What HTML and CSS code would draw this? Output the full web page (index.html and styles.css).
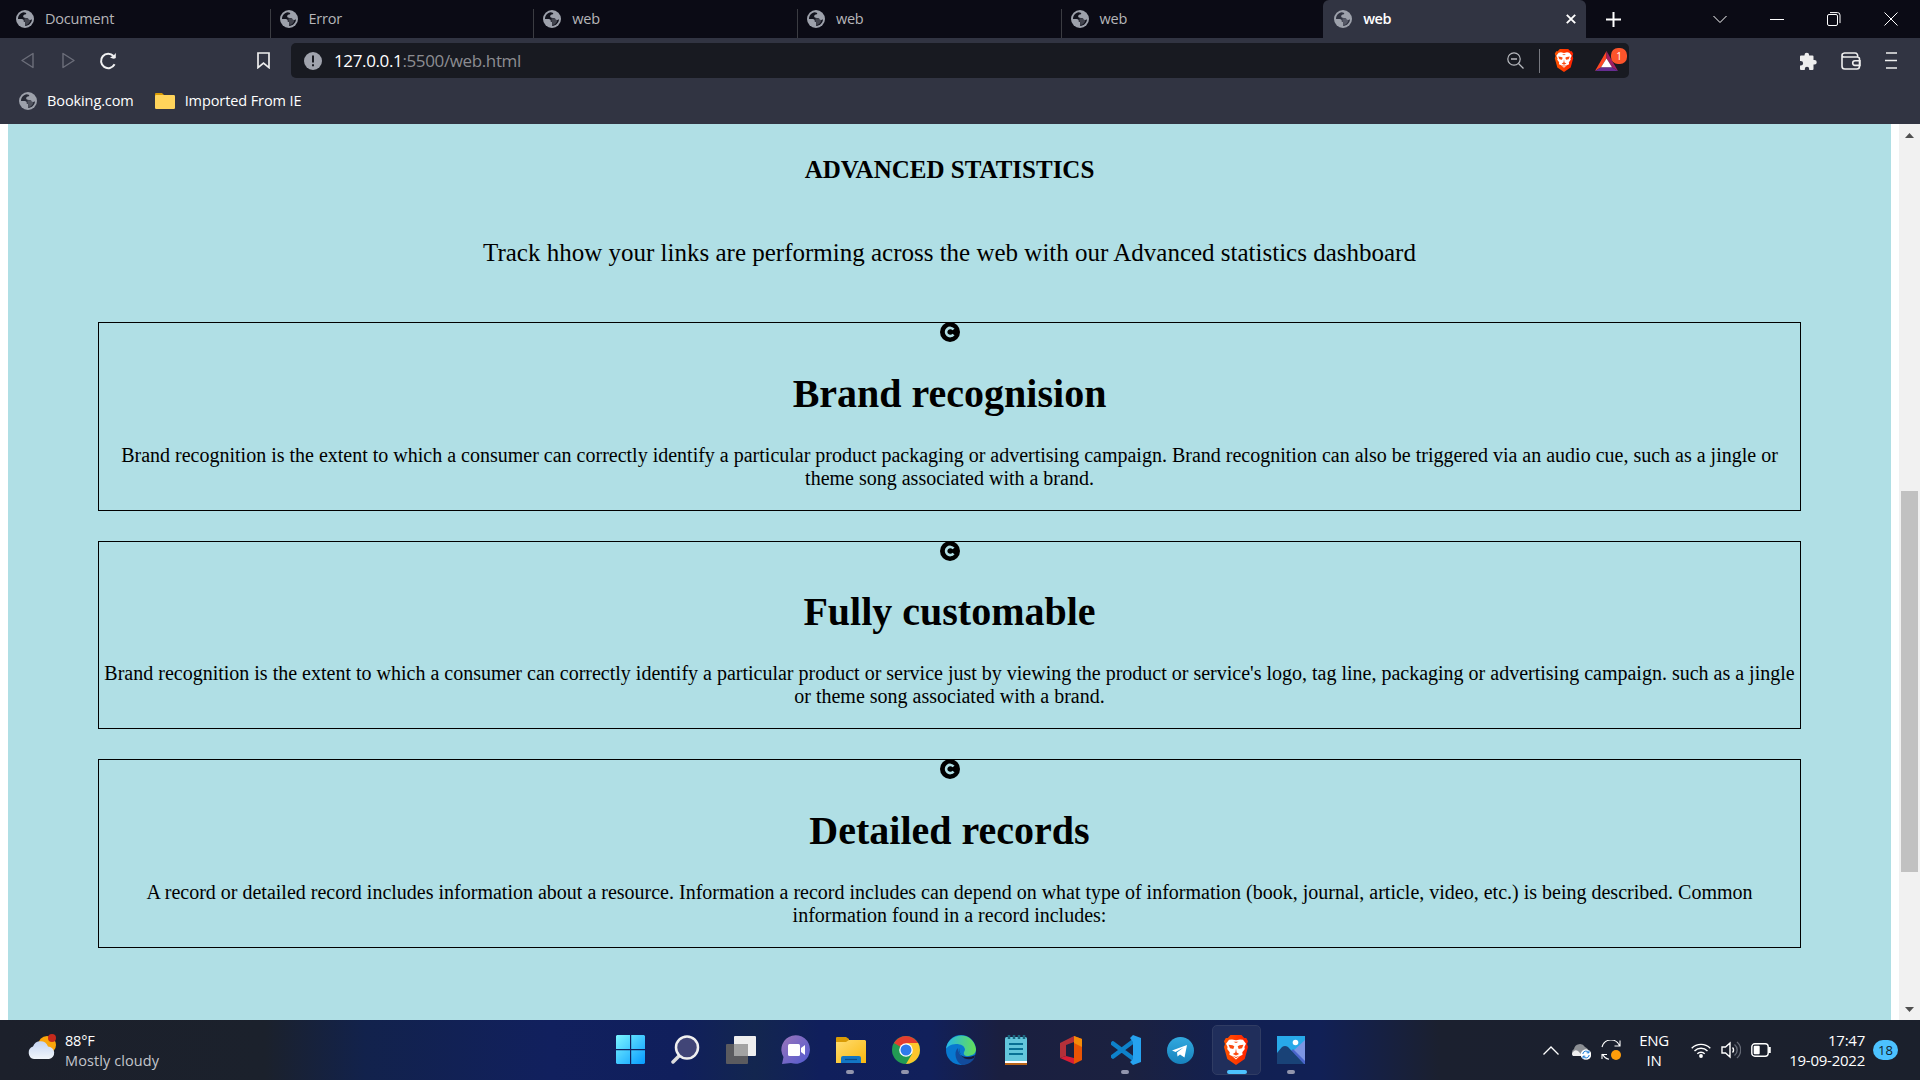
FILE: index.html
```html
<!DOCTYPE html>
<html lang="en">
<head>
<meta charset="utf-8">
<title>web</title>
<link rel="stylesheet" href="styles.css">
</head>
<body>
<svg class="defs" width="0" height="0">
  <defs>
    <symbol id="globe" viewBox="0 0 18 18">
      <circle cx="9" cy="9" r="9" fill="#9da1ab"/>
      <path class="sea" d="M7.2 2.2C4 3 1.9 6 2 9h3.600c1.500 0 2.200.8 2.200 2v1h1.400v3.900c3.900-.2 6.700-3.200 6.800-6.700-.9.700-1.700 1-2.700.6-1-.4-.9-1.600-2.100-1.800-1.700-.2-3.600.1-4-1.300-.3-1.300 1-2.200 2.600-2.400.9-.2.400-1.500-1-1.700z"/>
      <path d="M8.500 8.300h3.600c.4 1.400 1.600 1.200 2.300 1.400-.3 2.800-2.100 4.800-4.800 5.300v-3H8.300z" fill="#9da1ab" opacity=".35"/>
    </symbol>
    <symbol id="lion" viewBox="0 0 26 30">
      <path d="M7.500 0h11l2.700 3 2-.1L25 6.300 24 9l1 3-3.300 12-8.700 6-8.700-6L1 12l1-3-1-2.700 1.800-3.400 2 .1z" fill="url(#lg)"/>
      <path d="M13 5.200l4-.8 3 .4 3 4-1.600 3.300.4 2-2.500 3.200.3 2.500-3 1.500-3.600 3.200-3.600-3.200-3-1.500.3-2.500-2.500-3.200.4-2L3 8.800l3-4 3-.4z" fill="#fff"/>
      <path d="M5.500 9.800l4 .5 1.800 1-1 2.600-3.300-.6zM20.500 9.800l-4 .5-1.800 1 1 2.600 3.300-.6zM13 13.500l.7 4 2.500 1.400-3.200 1.500-3.200-1.500 2.500-1.400zM10.500 6.800h5L13 8.100zM9.500 20.700l3.500 1.200 3.500-1.200-3.500 2.500z" fill="#fb4b12"/>
    </symbol>
    <linearGradient id="lg"><stop stop-color="#ff5500"/><stop offset="1" stop-color="#ff2000"/></linearGradient>
    <symbol id="copy" viewBox="0 0 20 20">
      <circle cx="10" cy="10" r="10" fill="#000"/>
      <path d="M13.500 7.600A4.100 4.100 0 1 0 13.500 12.400" fill="none" stroke="#b0dfe5" stroke-width="2.600"/>
    </symbol>
  </defs>
</svg>

<header class="browser">
  <div class="tabstrip">
    <div class="tab first"><svg class="globe"><use href="#globe"/></svg><span>Document</span></div>
    <div class="tab"><svg class="globe"><use href="#globe"/></svg><span>Error</span></div>
    <div class="tab"><svg class="globe"><use href="#globe"/></svg><span>web</span></div>
    <div class="tab"><svg class="globe"><use href="#globe"/></svg><span>web</span></div>
    <div class="tab"><svg class="globe"><use href="#globe"/></svg><span>web</span></div>
    <div class="tab active"><svg class="globe"><use href="#globe"/></svg><span>web</span>
      <svg class="close" viewBox="0 0 10 10"><path d="M.8.8l8.400 8.400M9.200.8L.8 9.200" stroke="#fff" stroke-width="1.900"/></svg></div>
    <svg class="plus" viewBox="0 0 15 15"><path d="M7.500 0v15M0 7.500h15" stroke="#fff" stroke-width="2"/></svg>
    <div class="window-buttons">
      <svg width="14" height="14" viewBox="0 0 14 14"><path d="M.5 4l6.500 6.500L13.500 4" class="thin"/></svg>
      <svg width="14" height="14" viewBox="0 0 14 14"><path d="M0 7.500h14" class="thin"/></svg>
      <svg width="14" height="14" viewBox="0 0 14 14"><rect x=".5" y="2.500" width="10" height="11" rx="1.500" class="thin"/><path d="M3 .6h7.500q2.500 0 2.500 2.500v8" class="thin"/></svg>
      <svg width="14" height="14" viewBox="0 0 14 14"><path d="M.5.500l13 13M13.500.5l-13 13" class="thin"/></svg>
    </div>
  </div>
  <div class="toolbar">
    <svg class="back" viewBox="0 0 13 16"><path d="M12 1v14L1 8z" class="nav"/></svg>
    <svg class="forward" viewBox="0 0 13 16"><path d="M1 1v14l11-7z" class="nav"/></svg>
    <svg class="reload" viewBox="0 0 18 18"><path d="M15.600 12.300A7.200 7.200 0 1 1 14.500 4" fill="none" stroke="#f0f0f2" stroke-width="2"/><path d="M11 5.500q3.500 2 5.800.5V.8q-.6 2.200-5.800 4.700z" fill="#f0f0f2"/></svg>
    <svg class="mark" viewBox="0 0 13 17"><path d="M1 1h11v14.600L6.500 11 1 15.600z" fill="none" stroke="#eee" stroke-width="1.700"/></svg>
    <div class="address">
      <svg class="info" viewBox="0 0 18 18"><circle cx="9" cy="9" r="9" fill="#a0a3ad"/><path d="M9 3.500v7M9 12.300v2" stroke="#181a21" stroke-width="2"/></svg>
      <div class="url"><b>127.0.0.1</b>:5500/web.html</div>
      <svg class="zoomout" viewBox="0 0 17 17"><circle cx="7" cy="7" r="6.200" fill="none" stroke="#b9bbc0" stroke-width="1.200"/><path d="M4 7h6M11.500 11.500l5 5" stroke="#b9bbc0" stroke-width="1.300"/></svg>
      <i class="divider"></i>
      <svg class="shield"><use href="#lion"/></svg>
      <div class="rewards">
        <svg viewBox="0 0 23 20"><path d="M11.500 0L0 20l6-3.700 5.500-8.800z" fill="#ff4724"/><path d="M11.500 0L23 20l-6-3.700-5.500-8.800z" fill="#9e1f63"/><path d="M0 20h23l-6-3.700H6z" fill="#662d91"/><path d="M11.500 7.500l5.500 8.800H6z" fill="#fff"/></svg>
        <span>1</span>
      </div>
    </div>
    <div class="tools">
      <svg width="18" height="18" viewBox="0 0 18 18"><path d="M1 4.500q0-1 1-1h3.500V3a2.300 2.300 0 0 1 4.600 0v.5h3.400q1 0 1 1V8h1a2.200 2.200 0 0 1 0 4.500h-1V17q0 1-1 1h-3.300v-1a2.200 2.200 0 0 0-4.400 0v1H2q-1 0-1-1v-3.500h.8a2.300 2.300 0 0 0 0-4.600H1z" fill="#eee"/></svg>
      <svg width="20" height="18" viewBox="0 0 20 18"><path d="M1 3.500v10.700Q1 17 3.800 17h12q2.700 0 2.700-2.800V7Q18.500 5 16 5H3Q1 5 1 3.200T3.500 1H14q2.800 0 2.800 4M19 8.800h-5a2.300 2.300 0 0 0 0 4.600h5z" fill="none" stroke="#eee" stroke-width="1.600"/></svg>
      <svg width="12" height="17" viewBox="0 0 12 17"><path d="M1 1h11M0 8.500h12M1 16h11" stroke="#eee" stroke-width="1.700"/></svg>
    </div>
  </div>
  <div class="bookmarks">
    <svg class="globe"><use href="#globe"/></svg><span>Booking.com</span>
    <svg class="folder" viewBox="0 0 20 16"><path d="M0 1q0-1 1-1h6l2 2v5H0z" fill="#d99b05"/><rect y="2" width="20" height="14" rx="1.200" fill="#ffd45b"/></svg><span>Imported From IE</span>
  </div>
</header>

<div class="viewport">
  <main class="statistics">
    <h2>ADVANCED STATISTICS</h2>
    <p class="lead">Track hhow your links are performing across the web with our Advanced statistics dashboard</p>
    <section class="card"><svg class="copy"><use href="#copy"/></svg>
      <h1>Brand recognision</h1>
      <p>Brand recognition is the extent to which a consumer can correctly identify a particular product packaging or advertising campaign. Brand recognition can also be triggered via an audio cue, such as a jingle or<br>theme song associated with a brand.</p></section>
    <section class="card"><svg class="copy"><use href="#copy"/></svg>
      <h1>Fully customable</h1>
      <p>Brand recognition is the extent to which a consumer can correctly identify a particular product or service just by viewing the product or service's logo, tag line, packaging or advertising campaign. such as a jingle<br>or theme song associated with a brand.</p></section>
    <section class="card"><svg class="copy"><use href="#copy"/></svg>
      <h1>Detailed records</h1>
      <p>A record or detailed record includes information about a resource. Information a record includes can depend on what type of information (book, journal, article, video, etc.) is being described. Common<br>information found in a record includes:</p></section>
  </main>
  <div class="scrollbar">
    <svg viewBox="0 0 9 5"><path d="M4.500 0L9 5H0z" fill="#505050"/></svg>
    <i class="thumb"></i>
    <svg viewBox="0 0 9 5"><path d="M4.500 5L9 0H0z" fill="#505050"/></svg>
  </div>
</div>

<footer class="taskbar">
  <div class="weather">
    <svg width="29" height="26" viewBox="0 0 29 26">
      <defs><linearGradient id="cl" x2="0" y2="1"><stop stop-color="#c5d5f2"/><stop offset="1" stop-color="#f1f5fa"/></linearGradient></defs>
      <circle cx="20" cy="11" r="9" fill="#fba60a"/><path d="M7 25A6.500 6.500 0 0 1 6 12.500 8 8 0 0 1 21 12.500 6.300 6.300 0 0 1 22 25z" fill="url(#cl)"/><circle cx="25" cy="4" r="4" fill="#c52a1c"/></svg>
    <div><span>88°F</span><small>Mostly cloudy</small></div>
  </div>
  <nav class="apps">
    <a><svg width="30" height="30" viewBox="0 0 30 30"><defs><linearGradient id="win" x2="1" y2="1"><stop stop-color="#7cf5ff"/><stop offset="1" stop-color="#069bff"/></linearGradient></defs><path d="M1 0h13v14H0V1zM15.200 0H28l1 1v13H15.200zM0 15.200h14V29H1l-1-1zM15.200 15.200H29V28l-1 1H15.200z" fill="url(#win)"/></svg></a>
    <a><svg width="30" height="30" viewBox="0 0 30 30"><path d="M9 20l-7 7" stroke="#ddd" stroke-width="3.500" stroke-linecap="round"/><circle cx="16" cy="12.500" r="11" fill="#414577" stroke="#f0f0f0" stroke-width="2.500"/></svg></a>
    <a><svg width="32" height="30" viewBox="0 0 32 30"><rect x="9" y="1" width="22" height="20" rx="1" fill="#eee"/><rect x="1" y="9" width="22" height="20" rx="1" fill="#5b5b5f"/><path d="M9 9h14v12H9z" fill="#a2a2a2"/></svg></a>
    <a><svg width="30" height="30" viewBox="0 0 30 30"><defs><linearGradient id="chat" x2="1" y2="1"><stop stop-color="#9c75ba"/><stop offset="1" stop-color="#505ad0"/></linearGradient></defs><path d="M1 29l1.500-7A14.300 14.300 0 1 1 10 28z" fill="url(#chat)"/><rect x="7" y="9" width="12" height="12" rx="1.500" fill="#fff"/><path d="M20 13l4-3v10l-4-3z" fill="#fff"/></svg></a>
    <a class="open"><svg width="30" height="30" viewBox="0 0 30 30"><defs><linearGradient id="fold" x2="1" y2="1"><stop stop-color="#ffdc70"/><stop offset="1" stop-color="#f9b80e"/></linearGradient></defs><path d="M0 3q0-1 1-1h9l3 2v6H0z" fill="#d99b05"/><path d="M0 7h10l3-2h16l1 1v22H0z" fill="url(#fold)"/><path d="M5 28v-5q0-2 2-2h16q2 0 2 2v5z" fill="#1376c4"/><path d="M9 24.500h12" stroke="#0b4c8a" stroke-width="1.200"/></svg></a>
    <a class="open"><svg width="28" height="28" viewBox="0 0 28 28"><circle cx="14" cy="14" r="14" fill="#229b54"/><path d="M14 14L1.900 7A14 14 0 0 1 26.100 7z" fill="#e43d2f"/><path d="M14 7h12.100A14 14 0 0 1 14 28l6-10z" fill="#fcc62b"/><circle cx="14" cy="14" r="6.800" fill="#fff"/><circle cx="14" cy="14" r="5.500" fill="#2e7bed"/></svg></a>
    <a><svg width="30" height="30" viewBox="0 0 30 30"><defs><linearGradient id="ed"><stop stop-color="#25b7ea"/><stop offset="1" stop-color="#65df55"/></linearGradient></defs><circle cx="15" cy="15" r="15" fill="#0878d0"/><path d="M0 14C2-3 27-5 30 14c0 5-4 7-9 7-5-1-3-4-2-6 0-4-4-6-9-6S1 12 0 14z" fill="url(#ed)"/><path d="M12 13c-5 4-2 15 4 17 7 0 11-4 13-8-8 4-17 0-17-9z" fill="#124b9c"/><path d="M14 13c-2 6 2 9 7 9 3 0 6-1 8-2l-1 3c-8 4-16-2-14-10z" fill="#171b3e"/></svg></a>
    <a><svg width="22" height="30" viewBox="0 0 22 30"><rect y="2" width="22" height="28" rx="1.500" fill="#63c6dc"/><path d="M0 26h22v2H0z" fill="#fff"/><path d="M0 28h22v2H0z" fill="#ba6518"/><path d="M4 9h14M4 14h14M4 19h14" stroke="#087095" stroke-width="1.800"/><path d="M4 0v4M9 0v4M14 0v4M19 0v4" stroke="#1c6780" stroke-width="2.500"/></svg></a>
    <a><svg width="22" height="28" viewBox="0 0 22 28"><path d="M0 7L14 0v6L6 9v11L0 22z" fill="#b33039"/><path d="M14 0l8 3v21l-8 4z" fill="#e85404"/><path d="M14 0l8 3v8l-8-4z" fill="#f58b08"/><path d="M0 22l6-2 8 2v6z" fill="#d91d35"/></svg></a>
    <a class="open"><svg width="30" height="30" viewBox="0 0 30 30"><path d="M2 8.500l20 15M2 21.500l20-15" stroke="#0e82cb" stroke-width="4.500" stroke-linecap="round"/><path d="M22 0l8 3v24l-8 3-3-3 3-3V7l-3-4z" fill="#26a2ef"/></svg></a>
    <a><svg width="27" height="27" viewBox="0 0 27 27"><defs><linearGradient id="tg" x2="0" y2="1"><stop stop-color="#32a9df"/><stop offset="1" stop-color="#1782bd"/></linearGradient></defs><circle cx="13.500" cy="13.500" r="13.500" fill="url(#tg)"/><path d="M5 13.500L20 8l-2.500 12.500-4.500-3-2.500 2-.5-4 6.500-5-8 4.500z" fill="#fff"/></svg></a>
    <a class="open current"><svg width="26" height="30"><use href="#lion"/></svg></a>
    <a class="open"><svg width="28" height="28" viewBox="0 0 28 28"><path d="M0 0h28v28H0z" fill="#28a9e9"/><path d="M28 4v24H15V16z" fill="#7d96e4"/><path d="M13 16l3-3 12 12v3H14z" fill="#4a65cb"/><path d="M0 17l5-6q3-2 6 0l16 17H0z" fill="#194277"/><circle cx="18.500" cy="6.500" r="2.800" fill="#fff"/></svg></a>
  </nav>
  <div class="tray">
    <svg class="chevron" viewBox="0 0 16 9"><path d="M.5 8.500L8 1l7.500 7.500" class="chev-line"/></svg>
    <svg class="cloud" viewBox="0 0 20 17"><path d="M3 13A4 4 0 0 1 3 6 6 6 0 0 1 14 4 5 5 0 0 1 15 13z" fill="#8c8f94"/><path d="M2 13q-2-2 0-4 2-3 5-1l5 5z" fill="#eee"/><circle cx="15" cy="11.500" r="5.300" fill="#fff"/><path d="M11.800 11a3.300 3.300 0 0 1 6-1.500M18.200 12a3.300 3.300 0 0 1-6 1.500M18 7.500v2.300h-2.300M12 15.500v-2.300h2.300" stroke="#1679d4" fill="none"/></svg>
    <svg class="sync" viewBox="0 0 20 20"><path d="M1 7A9.300 9.300 0 0 1 18.500 5.500M19 .5v5.500H13.500M8 19.300A9 9 0 0 1 1.500 14M6 14.500H1V19" class="sync-line"/><circle cx="15" cy="15" r="5" fill="#ff9d0b"/></svg>
    <div class="language">ENG<br>IN</div>
    <svg class="wifi" viewBox="0 0 20 15"><path d="M.7 5.200a13.200 13.200 0 0 1 18.600 0M3.500 8a9.200 9.200 0 0 1 13 0M6.300 10.800a5.300 5.300 0 0 1 7.400 0" class="tray-line"/><circle cx="10" cy="13" r="1.900" fill="#fff"/></svg>
    <svg class="volume" viewBox="0 0 20 18"><path d="M1 6h3.500L9 2v14l-4.500-4H1zM11.500 6.500a3.500 3.500 0 0 1 0 5" class="tray-line"/><path d="M13.500 3.500a7 7 0 0 1 0 11M16 1a10.500 10.500 0 0 1 0 16" class="tray-line dim"/></svg>
    <svg class="battery" viewBox="0 0 20 14"><rect x=".8" y=".8" width="16.400" height="12.400" rx="3" class="tray-line"/><rect x="2.700" y="2.700" width="6" height="8.600" rx="1" fill="#fff"/><path d="M18.500 4v6" stroke="#fff" stroke-width="2.500"/></svg>
    <div class="clock">17:47<br>19-09-2022</div>
    <div class="count">18</div>
  </div>
</footer>
</body>
</html>
```

FILE: styles.css
```css
* { box-sizing: border-box; }
body { margin: 0; width: 1920px; height: 1080px; overflow: hidden; display: flex; flex-direction: column; font-family: "Open Sans", "Noto Sans", sans-serif; color: #fff; }
svg { display: block; flex: none; }
.defs { position: absolute; }
.thin { fill: none; stroke: #fff; stroke-width: 1; }
.browser { height: 124px; background: #313442; flex: none; }

.tabstrip { height: 38px; display: flex; align-items: center; background: #0b0b15; --sea: #12131d; }
.tab { width: 263.700px; height: 38px; flex: none; display: flex; align-items: center; padding-left: 10px; gap: 11px; font-size: 14.500px; letter-spacing: -.2px; color: #b6b6b9; background: linear-gradient(#3b3c42, #3b3c42) 0 9px / 1px 29px no-repeat; }
.tab span { padding-bottom: 2px; }
.tab.first { width: 269.500px; padding-left: 16px; background: none; }
.tab.active { background: #313442; border-radius: 6px 6px 0 0; width: 263px; margin-left: -1px; padding-left: 11px; color: #fff; font-weight: 600; letter-spacing: -.5px; --sea: #313442; }
.globe { width: 18px; height: 18px; }
.sea { fill: var(--sea, #282b37); }
.close { width: 10px; height: 10px; margin-left: auto; margin-right: 10px; }
.plus { width: 15px; height: 15px; margin-left: 20px; }
.window-buttons { display: flex; gap: 43px; margin-left: auto; margin-right: 22px; padding-bottom: 1px; }

.toolbar { height: 43px; display: flex; align-items: center; padding-top: 2px; }
.nav { fill: none; stroke: #6c6e7a; stroke-width: 1.400; stroke-linejoin: round; }
.back { width: 13px; height: 17px; margin-left: 21px; }
.forward { width: 13px; height: 17px; margin-left: 28px; }
.reload { width: 18px; height: 18px; margin-left: 24px; }
.mark { width: 13px; height: 17px; margin-left: 140px; }
.address { width: 1338px; height: 35px; margin-left: 21px; border-radius: 5px; background: #181a21; display: flex; align-items: center; padding-left: 13px; }
.info { width: 18px; height: 18px; }
.url { margin-left: 12px; font-size: 17px; letter-spacing: -.37px; color: #8c8d92; flex: 1; }
.url b { color: #fff; font-weight: 400; }
.zoomout { width: 17px; height: 17px; }
.divider { width: 1px; height: 24px; margin: 0 14px 0 15px; background: #777980; }
.shield { width: 20px; height: 23px; }
.rewards { position: relative; margin: 0 11px 0 21px; }
.rewards svg { width: 23px; height: 20px; }
.rewards span { position: absolute; left: 16px; top: -3px; width: 16px; height: 16px; border-radius: 7px; background: #fb542b; font-size: 10px; line-height: 16px; text-align: center; }
.tools { display: flex; align-items: center; gap: 24px; margin-left: auto; margin-right: 22px; padding-right: 1px; }

.bookmarks { height: 43px; display: flex; align-items: center; padding-left: 19px; padding-bottom: 4px; font-size: 14.500px; letter-spacing: -.1px; }
.bookmarks span { margin: 0 21px 0 10px; padding-bottom: 1px; }
.folder { width: 20px; height: 16px; }

.viewport { height: 896px; display: flex; background: #fff; padding-left: 8px; color: #000; }
.statistics { width: 1883px; background: #b0dfe5; padding: 32px 90px 0; font-family: "Liberation Serif", "Times New Roman", serif; text-align: center; }
.statistics h2 { margin: 0; font-size: 25px; line-height: 28px; }
.lead { margin: 55px 0; font-size: 25px; line-height: 28px; }
.card { border: 1px solid #000; height: 188.500px; margin-bottom: 30px; }
.card .copy { width: 20px; height: 20px; margin: -.6px auto 0; }
.card h1 { font-size: 40px; line-height: 46px; margin: 28.500px 0 27px; }
.card p { margin: 0; font-size: 20px; line-height: 23px; white-space: nowrap; }
.scrollbar { width: 21px; margin-left: 8px; background: #f1f1f1; display: flex; flex-direction: column; align-items: center; padding: 9px 1px 8px 0; }
.scrollbar svg { width: 9px; height: 5px; }
.thumb { width: 17px; height: 381px; margin-top: 353px; margin-bottom: auto; margin-left: 1px; background: #c1c1c1; }

.taskbar { height: 60px; display: grid; grid-template-columns: 608px 1fr auto; background: linear-gradient(90deg, #1c202b 0, #1b212c 265px, #12224c 365px, #11205e 550px, #101f5c 680px, #13264f 755px, #101f5c 820px, #11205b 930px, #1a1f40 1000px, #1b2140 1130px, #112052 1240px, #112056 1320px, #1b202f 1440px, #1b202c 100%); }
.weather { display: flex; padding: 14px 0 0 27px; gap: 9px; font-size: 14px; }
.weather div { display: flex; flex-direction: column; margin-top: -3px; letter-spacing: -.2px; }
.weather span, .weather small { font-size: 14.500px; line-height: 20px; }
.weather small { color: #c3c6cb; letter-spacing: .1px; }
.apps { display: flex; gap: 6.050px; padding-top: 5px; }
.apps a { width: 49px; height: 50px; flex: none; display: flex; align-items: center; justify-content: center; position: relative; border-radius: 5px; }
.apps a:first-child { margin-left: -2px; }
.apps .open::after { content: ""; position: absolute; bottom: 1px; left: 20px; width: 8px; height: 4px; border-radius: 2px; background: #9295ad; }
.apps .current { background: #202e5b; border: 1px solid #303c63; }
.apps .current::after { left: 14px; width: 20px; bottom: 0; background: #4cc2ff; }
.tray { display: flex; align-items: center; padding-right: 22px; font-size: 15px; line-height: 20px; }
.tray-line { fill: none; stroke: #fff; stroke-width: 1.400; }
.sync-line { fill: none; stroke: #fff; stroke-width: 1.100; }
.chev-line { fill: none; stroke: #fff; stroke-width: 1.300; }
.dim { stroke: #646975; }
.chevron { width: 16px; height: 9px; }
.cloud { width: 20px; height: 17px; margin: 3px 10px 0 12px; }
.sync { width: 20px; height: 20px; }
.language { width: 30px; margin: 0 22px 0 18px; text-align: center; letter-spacing: -.3px; }
.wifi { width: 20px; height: 15px; }
.volume { width: 20px; height: 18px; margin: 0 10px; }
.battery { width: 20px; height: 14px; }
.clock { width: 78px; margin-left: 16px; text-align: right; letter-spacing: -.25px; white-space: nowrap; }
.count { width: 25px; height: 20px; margin-left: 8px; border-radius: 10px; background: #4cc2ff; color: #111d2c; text-align: center; font-size: 13px; }
```
